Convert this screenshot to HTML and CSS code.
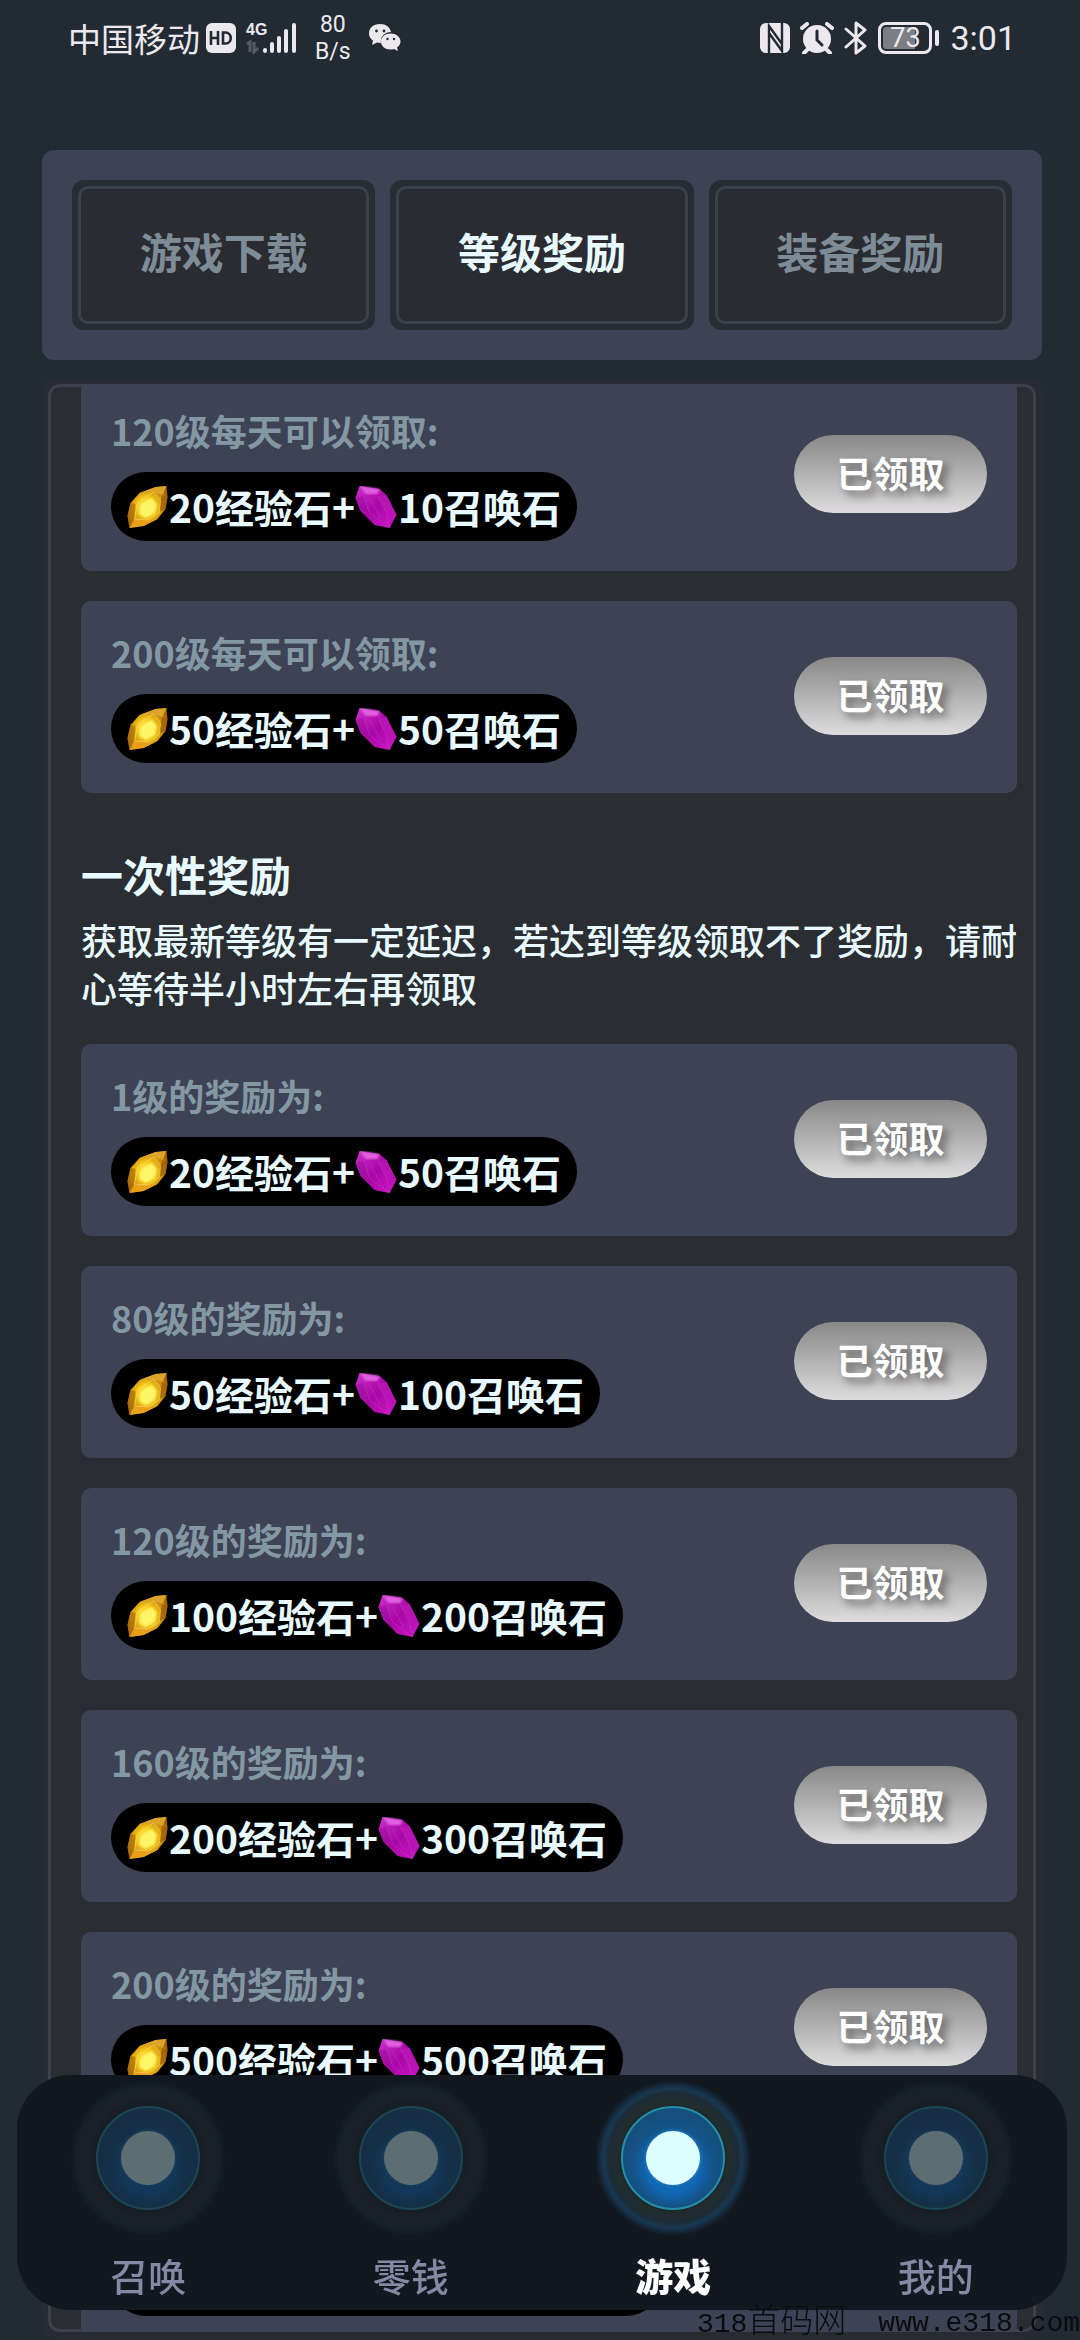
FILE: index.html
```html
<!DOCTYPE html>
<html lang="zh-CN">
<head>
<meta charset="utf-8">
<meta name="viewport" content="width=device-width">
<title>等级奖励</title>
<link rel="stylesheet" href="styles.css">
</head>
<body>
<svg class="defs" width="0" height="0" aria-hidden="true">
  <defs>
    <radialGradient id="gold" cx=".48" cy=".5" r=".6">
      <stop offset="0" stop-color="#fffb80"/><stop offset=".35" stop-color="#f8d01c"/><stop offset=".7" stop-color="#d0900c"/><stop offset="1" stop-color="#a06004"/>
    </radialGradient>
    <linearGradient id="pink" x1="0" y1="0" x2="1" y2="1">
      <stop offset="0" stop-color="#cc30cc"/><stop offset=".5" stop-color="#a808a4"/><stop offset="1" stop-color="#cc18c8"/>
    </linearGradient>
    <radialGradient id="disc" cx=".5" cy=".58" r=".52">
      <stop offset=".5" stop-color="#1068b4"/><stop offset=".75" stop-color="#155388"/><stop offset="1" stop-color="#164e7c"/>
    </radialGradient>
    <radialGradient id="halo">
      <stop offset=".62" stop-color="#1a2427"/><stop offset=".72" stop-color="#222d2f"/><stop offset=".83" stop-color="#1c2b35"/><stop offset=".89" stop-color="#183852"/><stop offset=".94" stop-color="#162a3c"/><stop offset="1" stop-color="#111820"/>
    </radialGradient>
    <radialGradient id="halo-dim">
      <stop offset=".62" stop-color="#151c24"/><stop offset=".8" stop-color="#1a2129"/><stop offset=".92" stop-color="#182029"/><stop offset="1" stop-color="#111820"/>
    </radialGradient>
    <filter id="soft"><feGaussianBlur stdDeviation="1"/></filter>
    <symbol id="gem-gold" viewBox="0 0 42 42">
      <path d="M40 0 29 1 13 7 4 17 1 30 3 42 17 40 31 33 39 23 41 11Z" fill="url(#gold)"/>
      <path d="M40 0 36 9 27 6 13 7 29 1Z" fill="#dca428"/>
      <path d="M36 9 41 11 39 23 33 26 34 15Z" fill="#9c5c04" opacity=".75"/>
      <path d="M4 17 1 30 3 42 8 31 9 18Z" fill="#a86c08" opacity=".7"/>
      <path d="M3 42 17 40 31 33 22 34 8 33Z" fill="#e8a018"/>
      <path d="M27 6 34 15 33 26 22 34 8 33 11 17Z" fill="none" stroke="#ffe890" opacity=".5"/>
      <path d="m14 19 11-7 5 6-2 9-9 5-6-4Z" fill="#fff568" filter="url(#soft)"/>
    </symbol>
    <symbol id="gem-pink" viewBox="0 0 42 42">
      <path d="M4 0 24 3 31 9 41 29 34 42 19 39 5 25 0 12Z" fill="url(#pink)"/>
      <path d="M4 0 24 3 22 8 10 8Z" fill="#e060e0" filter="url(#soft)"/>
      <path d="M8 10 0 12 5 25 14 27Z" fill="#980a98" opacity=".5"/>
      <path d="m22 10 9-1 10 20-10-2Z" fill="#b814b4"/>
      <path d="m8 10 6 17 20 15M22 10l9 17 3 15M14 12l11 20" fill="none" stroke="#dc40d8" opacity=".35"/>
    </symbol>
    <symbol id="orb" viewBox="0 0 156 156">
      <circle cx="78" cy="78" r="51" fill="url(#disc)" stroke="#2490a8" stroke-width="2"/>
      <circle cx="78" cy="78" r="28" fill="#2878b8" filter="url(#soft)"/>
      <circle cx="78" cy="78" r="27" fill="#dcfeff"/>
    </symbol>
  </defs>
</svg>

<div class="app">
  <header class="status">
    <div class="status-side">
      <span class="carrier">中国移动</span>
      <svg class="hd" width="30" height="30" viewBox="0 0 30 30" aria-label="HD"><rect width="30" height="30" rx="6" fill="#ece9ee"/><path d="M5 8v14M12 8v14M5 15h7M17 9.500v11h2.500c7 0 7-11 0-11z" fill="none" stroke="#222a33" stroke-width="2.600"/></svg>
      <div class="signal">
        <span class="net">4G</span>
        <svg width="51" height="32" viewBox="0 0 51 32"><path d="M1 22l3-2v10M8 20v10l4-4" fill="none" stroke="#545a60" stroke-width="3"/><path d="M19 28v1M26 22v7M33 16v13M40 9v20M48 3v26" stroke="#ece9ee" stroke-width="4" stroke-linecap="round"/></svg>
      </div>
      <span class="speed">80<br>B/s</span>
      <svg class="wechat" width="32" height="28" viewBox="0 0 32 28"><path d="M11 0C4 0 0 4 0 9.500c0 3 1.500 5.500 4 7L3 21l5-2.500 4 .5C11 12 16 8 22 8 21 3 17 0 11 0Z" fill="#ece9ee"/><path d="M21.500 9.500c-5.500 0-9.500 3.500-9.500 8s4 8 9.500 8c1.500 0 2.500 0 3.500-.5l4 2-1-3.500c2-1.500 3.500-3.500 3.500-6 0-4.500-4.500-8-10-8Z" fill="#ece9ee"/><g fill="#222a33"><circle cx="7.500" cy="7" r="1.400"/><circle cx="15" cy="7" r="1.400"/><circle cx="18.500" cy="15" r="1.200"/><circle cx="25" cy="15" r="1.200"/></g></svg>
    </div>
    <div class="status-side right">
      <svg width="30" height="30" viewBox="0 0 30 30"><rect width="30" height="30" rx="6" fill="#ece9ee"/><path d="M9 30V3l13 18V0M9 10l13 18V16" fill="none" stroke="#222a33" stroke-width="2.400"/></svg>
      <svg width="34" height="32" viewBox="0 0 34 32"><circle cx="17" cy="17" r="14" fill="#ece9ee"/><path d="M2 6l5-4M32 6l-5-4M7 28l-3 3M27 28l3 3" stroke="#ece9ee" stroke-width="4" stroke-linecap="round"/><path d="M17 9v9l5 5" fill="none" stroke="#222a33" stroke-width="3" stroke-linecap="round"/></svg>
      <svg width="24" height="34" viewBox="0 0 24 34"><path d="M2 8l19 17-9 7V2l9 7L2 26" fill="none" stroke="#ece9ee" stroke-width="3" stroke-linecap="round" stroke-linejoin="round"/></svg>
      <div class="battery"><span>73</span></div>
      <time class="clock">3:01</time>
    </div>
  </header>

  <nav class="tabs" aria-label="奖励分类">
    <button class="tab" type="button"><span>游戏下载</span></button>
    <button class="tab active" type="button"><span>等级奖励</span></button>
    <button class="tab" type="button"><span>装备奖励</span></button>
  </nav>

  <main class="panel">
    <div class="frame">
      <div class="scroll">
        <section class="list">
          <article class="card"><div><h3>120级每天可以领取:</h3><p class="pill"><svg class="gem"><use href="#gem-gold"/></svg>20经验石+<svg class="gem"><use href="#gem-pink"/></svg>10召唤石</p></div><button class="claim" type="button">已领取</button></article>
          <article class="card"><div><h3>200级每天可以领取:</h3><p class="pill"><svg class="gem"><use href="#gem-gold"/></svg>50经验石+<svg class="gem"><use href="#gem-pink"/></svg>50召唤石</p></div><button class="claim" type="button">已领取</button></article>
        </section>
        <div class="intro">
          <h2>一次性奖励</h2>
          <p>获取最新等级有一定延迟，若达到等级领取不了奖励，请耐心等待半小时左右再领取</p>
        </div>
        <section class="list">
          <article class="card"><div><h3>1级的奖励为:</h3><p class="pill"><svg class="gem"><use href="#gem-gold"/></svg>20经验石+<svg class="gem"><use href="#gem-pink"/></svg>50召唤石</p></div><button class="claim" type="button">已领取</button></article>
          <article class="card"><div><h3>80级的奖励为:</h3><p class="pill"><svg class="gem"><use href="#gem-gold"/></svg>50经验石+<svg class="gem"><use href="#gem-pink"/></svg>100召唤石</p></div><button class="claim" type="button">已领取</button></article>
          <article class="card"><div><h3>120级的奖励为:</h3><p class="pill"><svg class="gem"><use href="#gem-gold"/></svg>100经验石+<svg class="gem"><use href="#gem-pink"/></svg>200召唤石</p></div><button class="claim" type="button">已领取</button></article>
          <article class="card"><div><h3>160级的奖励为:</h3><p class="pill"><svg class="gem"><use href="#gem-gold"/></svg>200经验石+<svg class="gem"><use href="#gem-pink"/></svg>300召唤石</p></div><button class="claim" type="button">已领取</button></article>
          <article class="card"><div><h3>200级的奖励为:</h3><p class="pill"><svg class="gem"><use href="#gem-gold"/></svg>500经验石+<svg class="gem"><use href="#gem-pink"/></svg>500召唤石</p></div><button class="claim" type="button">已领取</button></article>
          <article class="card"><div><h3></h3><p class="pill wide"></p></div></article>
        </section>
      </div>
    </div>
  </main>
</div>

<nav class="dock" aria-label="主导航">
  <a href="#summon"><svg class="orb" viewBox="0 0 156 156"><circle cx="78" cy="78" r="78" fill="url(#halo-dim)"/><use href="#orb" class="core"/></svg><span>召唤</span></a>
  <a href="#wallet"><svg class="orb" viewBox="0 0 156 156"><circle cx="78" cy="78" r="78" fill="url(#halo-dim)"/><use href="#orb" class="core"/></svg><span>零钱</span></a>
  <a href="#game" class="active"><svg class="orb" viewBox="0 0 156 156"><circle cx="78" cy="78" r="78" fill="url(#halo)"/><use href="#orb" class="core"/></svg><span>游戏</span></a>
  <a href="#mine"><svg class="orb" viewBox="0 0 156 156"><circle cx="78" cy="78" r="78" fill="url(#halo-dim)"/><use href="#orb" class="core"/></svg><span>我的</span></a>
</nav>
<div class="watermark"><span>318<b>首码网</b></span><span>www.e318.com</span></div>
</body>
</html>
```
FILE: styles.css
```css
* { box-sizing: border-box; }

body {
  margin: 0;
  background: #222a33;
  color: #e8faff;
  font-family: "Noto Sans CJK SC", "Noto Sans", sans-serif;
}

h2, h3, p { margin: 0; }

button {
  border: 0;
  padding: 0;
  font: inherit;
  color: inherit;
  cursor: pointer;
}

.defs { position: absolute; }

.app {
  display: flex;
  flex-direction: column;
  height: 100vh;
  padding: 0 38px 2px 42px;
}

/* status bar */
.status {
  display: flex;
  justify-content: space-between;
  align-items: center;
  flex: none;
  height: 76px;
  padding: 0 26px 0 26px;
  color: #ece9ee;
}

.status-side { display: flex; align-items: center; }
.status-side.right { gap: 10px; }
.carrier { font-size: 33px; line-height: 48px; }
.hd { margin: 0 10px 0 6px; }
.signal { display: grid; margin-right: 18px; }
.signal > * { grid-area: 1 / 1; }

.net {
  font: bold 16px/16px "Liberation Sans", sans-serif;
}

.speed {
  margin-right: 18px;
  font: 23px/27px Roboto, sans-serif;
  text-align: center;
}

.battery {
  position: relative;
  width: 54px;
  height: 32px;
  margin-right: 8px;
  padding: 2px;
  border: 3px solid #ece9ee;
  border-radius: 8px;
  font: 27px/22px Roboto, sans-serif;
  text-align: center;
}

.battery span {
  display: block;
  background: linear-gradient(90deg, #7b7e82 73%, transparent 73%);
  border-radius: 3px;
}

.battery::after {
  content: "";
  position: absolute;
  top: 5px;
  right: -10px;
  width: 4px;
  height: 16px;
  border-radius: 2px;
  background: #ece9ee;
}

.clock { font: 34px/40px Roboto, sans-serif; }

/* top tabs */
.tabs {
  display: grid;
  grid-template-columns: repeat(3, 1fr);
  gap: 15px;
  flex: none;
  margin-top: 74px;
  padding: 30px;
  border-radius: 12px;
  background: #3d4254;
}

.tab {
  display: flex;
  height: 150px;
  padding: 6px;
  border-radius: 12px;
  background: #272d33;
  color: #7e8c98;
  font-size: 42px;
  font-weight: 700;
}

.tab span {
  display: flex;
  flex: 1;
  align-items: center;
  justify-content: center;
  align-self: stretch;
  padding-bottom: 9px;
  border: 3px solid #3b424c;
  border-radius: 10px;
  background: #2a2c32;
}

.tab.active { color: #e8faff; }

/* reward list */
.panel {
  display: flex;
  flex: 1;
  min-height: 0;
  margin-top: 18px;
  padding: 6px;
  border-radius: 12px;
  background: #292b32;
}

.frame {
  display: flex;
  flex: 1;
  min-width: 0;
  border: 3px solid #3d414d;
  border-radius: 12px;
  background: #2a2d31;
}

.scroll {
  flex: 1;
  margin: -3px 0;
  padding: 0 16px 0 30px;
  overflow-y: auto;
  scrollbar-width: none;
}

.list { display: grid; gap: 30px; }
.list:first-child { margin-top: -5px; }

.card {
  display: flex;
  justify-content: space-between;
  align-items: center;
  min-height: 192px;
  padding: 27px 30px 30px;
  border-radius: 10px;
  background: #3d4254;
}

.card h3 {
  min-height: 48px;
  color: #8498a4;
  font-size: 36px;
  font-weight: 700;
  line-height: 48px;
}

.pill {
  display: inline-flex;
  align-items: center;
  height: 69px;
  margin-top: 18px;
  padding: 0 16px 0 15px;
  border-radius: 35px;
  background: #000;
  font-size: 39px;
  font-weight: 700;
  line-height: 69px;
  vertical-align: top;
}

.pill.wide { width: 550px; }
.gem { width: 43px; height: 42px; }

.claim {
  width: 193px;
  height: 78px;
  padding-bottom: 4px;
  border-radius: 39px;
  background: linear-gradient(#888, #dedcde);
  color: #fff;
  font-size: 36px;
  font-weight: 700;
  text-shadow: 5px 5px 8px rgba(0, 0, 0, .5);
}

.intro { padding: 50px 0 33px; }
.intro h2 { font-size: 42px; line-height: 62px; }
.intro p { margin-top: 10px; margin-right: -1px; font-size: 36px; font-weight: 500; line-height: 48px; }

/* bottom navigation */
.dock {
  position: fixed;
  right: 13px;
  bottom: 30px;
  left: 17px;
  display: grid;
  grid-template-columns: repeat(4, 1fr);
  padding: 5px 0 11px;
  border-radius: 54px;
  background: #111820;
}

.dock a {
  display: flex;
  flex-direction: column;
  align-items: center;
  gap: 15px;
  color: #8788a4;
  font-size: 38px;
  font-weight: 500;
  line-height: 48px;
  text-decoration: none;
}

.orb { width: 156px; height: 156px; }
.core { opacity: .36; }
.dock .active { color: #fff; font-weight: 900; }
.active .core { opacity: 1; }

.watermark {
  position: fixed;
  right: 0;
  bottom: 0;
  display: flex;
  gap: 32px;
  color: #0b0c10;
  font: 28px/30px "Liberation Mono", "Noto Sans CJK SC", monospace;
  white-space: nowrap;
}

.watermark b { font-size: 33px; font-weight: 300; }
```
